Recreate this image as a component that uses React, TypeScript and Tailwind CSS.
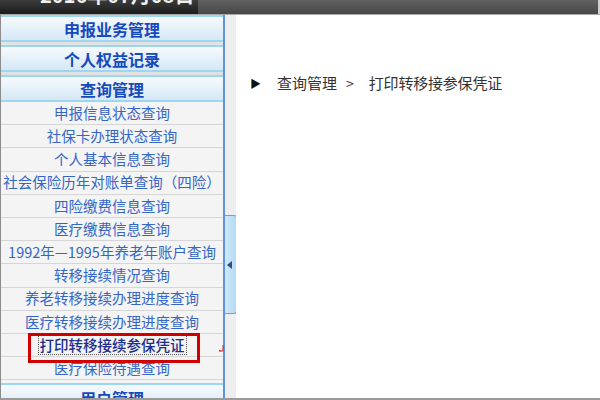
import React from "react";

const font = { fontFamily: '"Noto Sans CJK SC", "Noto Sans", sans-serif' };

const headers = ["申报业务管理", "个人权益记录", "查询管理"];

const items = [
  "申报信息状态查询",
  "社保卡办理状态查询",
  "个人基本信息查询",
  "社会保险历年对账单查询（四险）",
  "四险缴费信息查询",
  "医疗缴费信息查询",
  "1992年—1995年养老年账户查询",
  "转移接续情况查询",
  "养老转移接续办理进度查询",
  "医疗转移接续办理进度查询",
  "打印转移接续参保凭证",
  "医疗保险待遇查询",
];

function MenuHeader({ label, last }: { label: string; last?: boolean }) {
  return (
    <div className={last ? "" : "border-b-[3px] border-[#e2e2e2]"}>
      <div className="flex h-[27px] items-center justify-center border-y-2 border-[#9dd6f2] bg-gradient-to-b from-[#f6fafd] to-[#d5e8f5] text-[16px] font-bold text-[#1549bd]">
        {label}
      </div>
    </div>
  );
}

export default function App() {
  return (
    <div className="relative flex h-[400px] w-[600px] flex-col overflow-hidden bg-white" style={font}>
      {/* top bar */}
      <div className="flex h-[15px] shrink-0 border-b border-[#a9a9a9]">
        <div className="relative w-[198px] overflow-hidden bg-gradient-to-b from-[#3c3c3c] to-[#1c1c1c]">
          <span className="absolute left-[40px] top-[-20px] whitespace-nowrap text-[20px] font-bold text-[#f0f0f0]">
            2016年07月08日
          </span>
        </div>
        <div className="flex-1 bg-gradient-to-b from-[#626262] to-[#474747]" />
        <div className="w-[2px] bg-[#d0d0d0]" />
      </div>

      {/* main */}
      <div className="flex min-h-0 flex-1 border-b-2 border-[#9a9a9a]">
        {/* sidebar */}
        <div className="flex w-[223px] shrink-0 flex-col overflow-hidden border-l border-[#8c8c8c] bg-[#f4f4f4]">
          {headers.map((h, i) => (
            <MenuHeader key={h} label={h} last={i === headers.length - 1} />
          ))}
          {items.map((it) => {
            const selected = it === "打印转移接续参保凭证";
            return (
              <div
                key={it}
                className="flex h-[23.2px] shrink-0 items-center justify-center whitespace-nowrap border-b border-[#d6d6d6] text-[14.5px] leading-none"
              >
                {selected ? (
                  <span className="border border-dotted border-[#555] px-[1px] py-[2px] font-medium text-[#1b2d8a]">{it}</span>
                ) : (
                  <span className="text-[#3566c7]">{it}</span>
                )}
              </div>
            );
          })}
          <div className="mt-[3px]">
            <div className="flex h-[27px] items-start justify-center border-t-2 border-[#9dd6f2] bg-gradient-to-b from-[#f6fafd] to-[#d5e8f5] pt-[1px] text-[16px] font-bold text-[#1549bd]">
              用户管理
            </div>
          </div>
        </div>

        {/* blue divider */}
        <div className="w-[2px] shrink-0 bg-[#5f93e0]" />

        {/* splitter */}
        <div className="w-[11px] shrink-0 bg-[#eeeeee] pt-[200px]">
          <div className="flex h-[99px] w-[12px] items-center rounded-r-[3px] border border-l-0 border-[#5aa7e8] bg-gradient-to-r from-[#cfe8fa] to-[#b5daf4]">
            <svg width="5" height="8" viewBox="0 0 5 8" className="ml-[2px]">
              <polygon points="5,0 0,4 5,8" fill="#2b4c85" />
            </svg>
          </div>
        </div>

        {/* content */}
        <div className="flex-1 bg-white pl-[14px] pt-[57px]">
          <div className="flex items-center text-[15px] text-[#333]">
            <span className="text-[11px] text-[#111]">▶</span>
            <span className="ml-[16px]">查询管理</span>
            <span className="ml-[9px] text-[14px]">&gt;</span>
            <span className="ml-[15px] tracking-[-0.2px]">打印转移接参保凭证</span>
          </div>
        </div>
      </div>

      {/* annotation box */}
      <div className="absolute left-[28px] top-[333px] h-[30px] w-[172px] border-[3px] border-[#d00000]" />
      <svg className="absolute left-[219px] top-[344px]" width="6" height="10" viewBox="0 0 6 10">
        <path d="M4 1 V7 H1" stroke="#e02020" strokeWidth="1" fill="none" />
        <rect x="0" y="6" width="1.5" height="1.5" fill="#e02020" />
      </svg>
    </div>
  );
}
